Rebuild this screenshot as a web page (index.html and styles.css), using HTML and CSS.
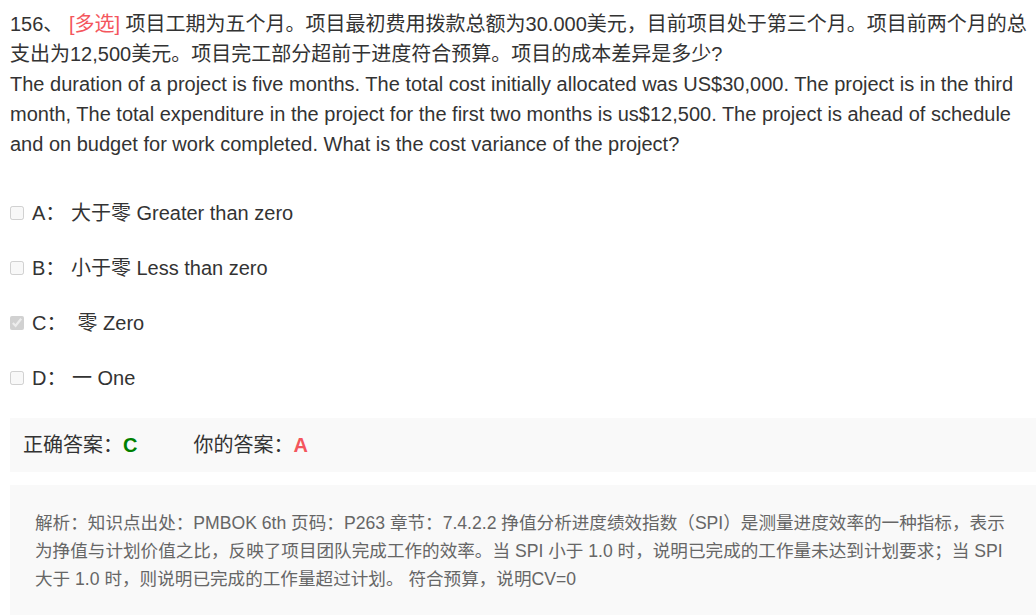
FILE: index.html
```html
<!DOCTYPE html>
<html lang="zh-CN">
<head>
<meta charset="utf-8">
<link rel="stylesheet" href="styles.css">
</head>
<body>
<div class="page">
  <div class="question">
    <p class="q-zh">156、 <span class="tag">[多选]</span> 项目工期为五个月。项目最初费用拨款总额为30.000美元，目前项目处于第三个月。项目前两个月的总支出为12,500美元。项目完工部分超前于进度符合预算。项目的成本差异是多少?</p>
    <p class="q-en">The duration of a project is five months. The total cost initially allocated was US$30,000. The project is in the third month, The total expenditure in the project for the first two months is us$12,500. The project is ahead of schedule and on budget for work completed. What is the cost variance of the project?</p>
  </div>
  <ul class="options">
    <li class="option"><input type="checkbox" class="box" disabled><span class="opt-text">A： 大于零 Greater than zero</span></li>
    <li class="option"><input type="checkbox" class="box" disabled><span class="opt-text">B： 小于零 Less than zero</span></li>
    <li class="option"><input type="checkbox" class="box" disabled checked><span class="opt-text">C：&nbsp; 零 Zero</span></li>
    <li class="option"><input type="checkbox" class="box" disabled><span class="opt-text">D： 一 One</span></li>
  </ul>
  <div class="answer">
    <span class="label">正确答案：</span><span class="correct">C</span>
    <span class="label mine">你的答案：</span><span class="wrong">A</span>
  </div>
  <div class="analysis">
    <p>解析：知识点出处：PMBOK 6th 页码：P263 章节：7.4.2.2 挣值分析进度绩效指数（SPI）是测量进度效率的一种指标，表示为挣值与计划价值之比，反映了项目团队完成工作的效率。当 SPI 小于 1.0 时，说明已完成的工作量未达到计划要求；当 SPI 大于 1.0 时，则说明已完成的工作量超过计划。 符合预算，说明CV=0</p>
  </div>
</div>
</body>
</html>
```

FILE: styles.css
```css
html, body {
  margin: 0;
  padding: 0;
  background: #ffffff;
}
body {
  font-family: "Liberation Sans", Arial, "Noto Sans CJK SC", sans-serif;
  color: #333333;
  overflow: hidden;
}
.page {
  padding: 10px 0 0 10px;
}
.question {
  font-size: 20px;
}
.q-zh {
  margin: 0;
  line-height: 29.5px;
}
.q-en {
  margin: 0;
  line-height: 30px;
}
.tag {
  color: #f4565d;
}
.options {
  list-style: none;
  margin: 26px 0 0 0;
  padding: 0;
}
.option {
  height: 55px;
  display: flex;
  align-items: center;
  font-size: 20px;
  line-height: 28px;
}
.box {
  width: 14px;
  height: 14px;
  margin: 0 8px 0 0;
}
.answer {
  margin-top: 12.5px;
  height: 54px;
  background: #f9f9f9;
  display: flex;
  align-items: center;
  padding-left: 13px;
  font-size: 20px;
  line-height: 28px;
}
.correct {
  color: #008000;
  font-weight: bold;
}
.mine {
  margin-left: 56px;
}
.wrong {
  color: #f4565d;
  font-weight: bold;
}
.analysis {
  margin-top: 13px;
  background: #f9f9f9;
  padding: 24px 25px 30px 25px;
  font-size: 17.6px;
  line-height: 28px;
  color: #666666;
}
.analysis p {
  margin: 0;
}
```
